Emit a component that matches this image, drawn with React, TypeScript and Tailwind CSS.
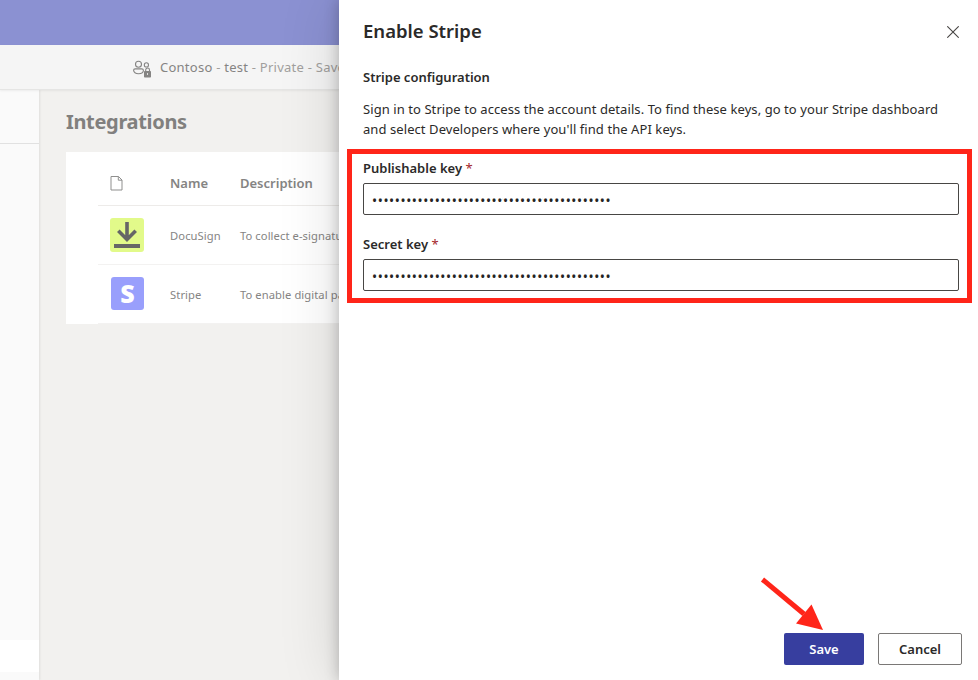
import type { ReactNode } from "react";

const MASKED_KEY = "•".repeat(42);

function PeopleLockIcon() {
  return (
    <svg width="19" height="19" viewBox="0 0 19 19" fill="none" stroke="#858483" strokeWidth="1.1">
      <circle cx="5.5" cy="4.2" r="3" />
      <circle cx="13.4" cy="4.9" r="2.1" />
      <path d="M2.2 8.9h6.6c1 0 1.6.6 1.6 1.4 0 2-2 3.4-4.9 3.4S.6 12.300.6 10.300c0-.8.7-1.400 1.600-1.400z" />
      <path d="M12.700 11.200V9.900a1.900 1.900 0 0 1 3.800 0v1.300" />
      <rect x="11" y="11" width="7" height="6.500" rx="0.800" fill="#858483" stroke="none" />
      <path d="M14.500 13v2" stroke="#f5f5f5" strokeWidth="0.800" />
    </svg>
  );
}

function FileIcon() {
  return (
    <svg width="13" height="15" viewBox="0 0 13 15" fill="none" stroke="#8f8f8e" strokeWidth="1">
      <path d="M1 0.500h7.500l3.500 3.500v10h-11z" />
      <path d="M8.300 0.500v3.700h3.700" />
    </svg>
  );
}

function DownloadTile() {
  return (
    <svg width="34" height="34" viewBox="0 0 34 34">
      <rect width="34" height="34" rx="3" fill="#e2fa8a" />
      <path d="M17 4v17.500M8.300 12.800l8.700 8.700 8.700-8.700" fill="none" stroke="#666666" strokeWidth="3.600" />
      <rect x="4" y="26" width="26" height="4" fill="#666666" />
    </svg>
  );
}

function StripeTile() {
  return (
    <div className="-mt-px ml-px flex h-[33px] w-[33px] items-center justify-center rounded-[3px] bg-[#999ffc] font-['Open_Sans',sans-serif] text-[25px] leading-none font-extrabold text-white">
      <span>S</span>
    </div>
  );
}

function Row({ icon, name, description }: { icon: ReactNode; name: string; description: string }) {
  return (
    <div className="flex h-[59px] items-center border-b border-[#f3f2f1] pl-3 text-[11.200px] text-[#858483]">
      <div className="w-[60px] shrink-0">{icon}</div>
      <div className="w-[70px] shrink-0 pt-[2px] tracking-[0.100px]">{name}</div>
      <div className="shrink-0 pt-[2px] tracking-[0.080px] whitespace-nowrap">{description}</div>
    </div>
  );
}

function KeyField({ label }: { label: string }) {
  return (
    <label className="block">
      <span className="block h-6 text-[13px] leading-[18px] font-semibold">
        {label} <span className="font-normal text-[#a4262c]">*</span>
      </span>
      <input
        readOnly
        value={MASKED_KEY}
        className="block h-8 w-full rounded-[2px] border border-[#484644] bg-white px-2 pt-[3px] font-['Noto_Sans',sans-serif] text-[13.500px] tracking-[0.620px] text-[#252423] outline-none"
      />
    </label>
  );
}

export default function App() {
  return (
    <div className="relative flex h-[680px] w-[978px] overflow-hidden bg-white font-['Noto_Sans',sans-serif]">
      <div className="flex w-[339px] shrink-0 flex-col overflow-hidden bg-[#f2f1ef]">
        <div className="h-[45px] shrink-0 bg-[#8b91d2]" />
        <header className="z-10 flex h-[45px] shrink-0 items-center border-b border-[#e5e5e4] bg-[#f5f5f5] pl-[133px] shadow-[0_1px_2px_rgba(0,0,0,0.060)]">
          <div className="mt-[5px] shrink-0"><PeopleLockIcon /></div>
          <div className="ml-2 shrink-0 pt-[2px] text-[13px] tracking-[0.250px] whitespace-nowrap text-[#a19f9d]">
            <span className="text-[#858483]">Contoso</span> - <span className="text-[#858483]">test</span> - Private - Saved
          </div>
        </header>
        <div className="flex min-h-0 flex-1">
          <aside className="flex w-[39px] shrink-0 flex-col bg-[#fafafa] shadow-[1px_0_2px_rgba(0,0,0,0.080)]">
            <div className="h-[54px] shrink-0 border-b border-[#e1e1e1]" />
            <div className="flex-1" />
            <div className="h-8 shrink-0 bg-white" />
            <div className="h-2 shrink-0" />
          </aside>
          <main className="w-[300px] shrink-0 overflow-hidden pl-[27px]">
            <h1 className="mt-[18px] h-[44px] text-[20px] leading-[28px] font-bold tracking-[-0.330px] text-[#81807e]">Integrations</h1>
            <section className="h-[172px] w-[600px] bg-white pl-8">
              <div className="flex h-[54px] items-center border-b border-[#edebe9] pt-[10px] pl-3 text-[13px] font-semibold text-[#858483]">
                <div className="w-[60px] shrink-0"><FileIcon /></div>
                <div className="w-[70px] shrink-0">Name</div>
                <div>Description</div>
              </div>
              <Row icon={<DownloadTile />} name="DocuSign" description="To collect e-signatures" />
              <Row icon={<StripeTile />} name="Stripe" description="To enable digital payments" />
            </section>
          </main>
        </div>
      </div>

      <section className="relative z-20 flex flex-1 flex-col bg-white pr-[19px] pl-6 text-[#2b2a29] shadow-[0_0_14px_rgba(0,0,0,0.240),0_0_58px_rgba(0,0,0,0.140)]">
        <div className="flex h-[68px] shrink-0 items-start justify-between pt-[17px]">
          <h2 className="text-[18.500px] leading-[28px] font-semibold">Enable Stripe</h2>
          <svg className="mt-[9px]" width="12" height="12" viewBox="0 0 12 12" stroke="#484644" strokeWidth="1.1">
            <path d="M0.300 0.300l11.400 11.400M11.700 0.300L0.300 11.700" />
          </svg>
        </div>
        <h3 className="h-[31px] shrink-0 text-[13px] leading-[18px] font-semibold">Stripe configuration</h3>
        <p className="h-[60px] shrink-0 text-[13px] leading-[20px] tracking-[0.073px] whitespace-nowrap">
          Sign in to Stripe to access the account details. To find these keys, go to your Stripe dashboard
          <br />
          and select Developers where you'll find the API keys.
        </p>
        <div className="relative flex flex-col gap-5">
          <KeyField label="Publishable key" />
          <KeyField label="Secret key" />
          <div className="pointer-events-none absolute -top-[10px] -right-[13px] -bottom-3 -left-4 border-5 border-[#ff2519]" />
        </div>
        <div className="-mr-[3px] mt-auto flex justify-end gap-[14px] pb-[15px] text-[13px] font-semibold">
          <button className="relative h-8 w-20 rounded-[2px] bg-[#373e9f] pt-px text-white">
            Save
            <svg className="absolute -top-[56px] -left-[25px]" width="64" height="56" viewBox="0 0 64 56">
              <path d="M3.500 2.500L45 37" stroke="#ff2519" strokeWidth="5" />
              <path d="M52.500 27.500L37 46.500L64 53z" fill="#ff2519" />
            </svg>
          </button>
          <button className="h-8 w-[84px] rounded-[2px] border border-[#7a7876] bg-white pt-px">Cancel</button>
        </div>
      </section>
    </div>
  );
}
